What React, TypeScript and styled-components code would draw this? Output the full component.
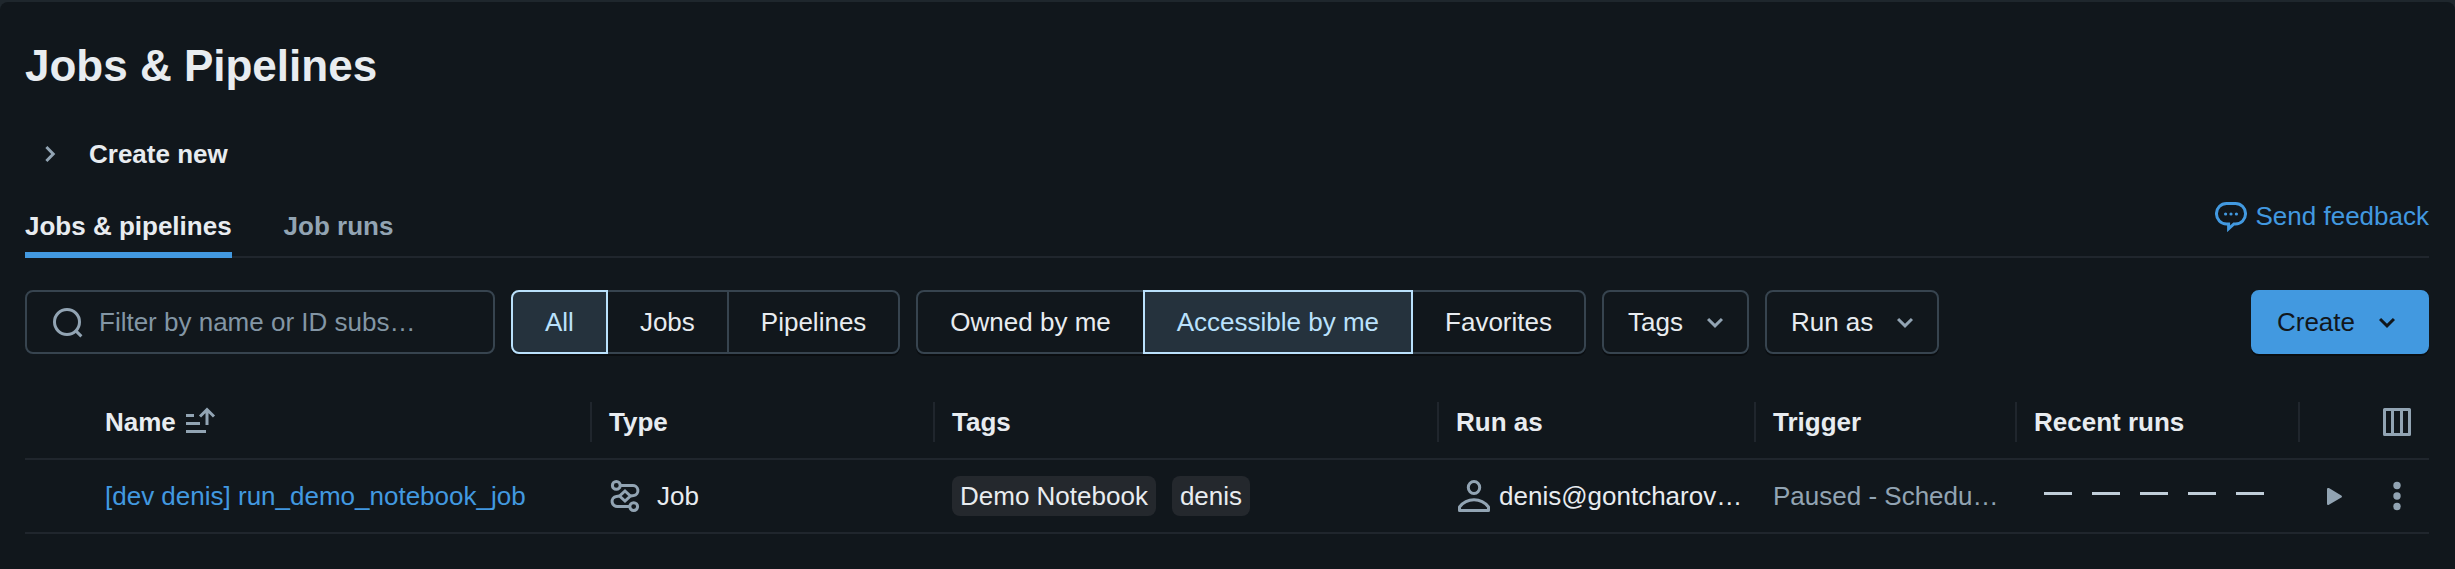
import React from "react";
import styled, { createGlobalStyle, css } from "styled-components";

const c = {
  bg: "#11171c",
  frame: "#1f272d",
  text: "#e8ecf0",
  muted: "#92a4b3",
  placeholder: "#8396a5",
  blue: "#4299e0",
  line: "#20262d",
  border: "#37444f",
  activeBg: "#25323d",
  activeFg: "#bae1fc",
  pill: "#24282d",
};

const Global = createGlobalStyle`
  * { box-sizing: border-box; }
  body { margin: 0; background: ${c.frame}; }
  button, input { font: inherit; }
`;

const Page = styled.main`
  margin-top: 2px;
  height: 567px;
  padding: 36px 26px 0 25px;
  border-radius: 8px 8px 0 0;
  background: ${c.bg};
  color: ${c.text};
  font: 26px/40px "Liberation Sans", Arial, sans-serif;
  overflow: hidden;
`;

const Title = styled.h1`
  margin: 0;
  font-size: 44px;
  line-height: 56px;
  font-weight: 700;
`;

const Disclosure = styled.div`
  display: flex;
  align-items: center;
  gap: 22px;
  margin-top: 40px;
  padding-left: 10px;
  font-weight: 700;
`;

const TabBar = styled.nav`
  display: flex;
  align-items: flex-end;
  gap: 52px;
  height: 84px;
  border-bottom: 2px solid ${c.line};
`;

const Tab = styled.a<{ $active?: boolean }>`
  height: 54px;
  margin-bottom: -2px;
  padding-top: 2px;
  font-weight: 700;
  color: ${(p) => (p.$active ? c.text : c.muted)};
  border-bottom: 6px solid ${(p) => (p.$active ? c.blue : "transparent")};
`;

const Feedback = styled.a`
  display: flex;
  align-items: center;
  gap: 9px;
  height: 40px;
  margin: 0 0 20px auto;
  color: ${c.blue};
`;

const Toolbar = styled.div`
  display: flex;
  gap: 16px;
  margin-top: 32px;
`;

const boxed = css`
  height: 64px;
  border: 2px solid ${c.border};
  border-radius: 8px;
`;

const Search = styled.label`
  ${boxed}
  display: flex;
  align-items: center;
  gap: 16px;
  width: 470px;
  padding-left: 24px;
  color: ${c.placeholder};
`;

const Segments = styled.div`
  display: flex;
  border-radius: 8px;
  box-shadow: 0 2px 0 rgba(0, 0, 0, 0.4);
`;

const Segment = styled.button<{ $active?: boolean }>`
  height: 64px;
  padding: 0 32px;
  border: 2px solid ${(p) => (p.$active ? c.activeFg : c.border)};
  background: ${(p) => (p.$active ? c.activeBg : c.bg)};
  color: ${(p) => (p.$active ? c.activeFg : c.text)};
  position: relative;
  z-index: ${(p) => (p.$active ? 1 : 0)};
  & + & { margin-left: -2px; }
  &:first-child { border-radius: 8px 0 0 8px; }
  &:last-child { border-radius: 0 8px 8px 0; }
`;

const Select = styled.button<{ $primary?: boolean }>`
  ${boxed}
  display: flex;
  align-items: center;
  gap: 16px;
  padding: 0 16px 0 24px;
  background: ${c.bg};
  color: ${c.text};
  box-shadow: 0 2px 0 rgba(0, 0, 0, 0.4);
  ${(p) =>
    p.$primary &&
    css`
      margin-left: auto;
      padding-right: 24px;
      border-color: ${c.blue};
      background: ${c.blue};
      color: ${c.bg};
    `}
`;

const Row = styled.div`
  display: grid;
  grid-template-columns: 567px 343px 504px 317px 261px 283px 64px 65px;
  align-items: center;
  height: 74px;
  border-bottom: 2px solid ${c.line};
`;

const Table = styled.section`
  margin-top: 32px;
`;

const HeadCell = styled.div<{ $bare?: boolean }>`
  display: flex;
  align-items: center;
  height: 40px;
  gap: 9px;
  font-weight: 700;
  padding-left: ${(p) => (p.$bare ? "80px" : "17px")};
  border-right: 2px solid ${c.line};
`;

const Cell = styled.div<{ $left?: number; $gap?: number; $muted?: boolean }>`
  display: flex;
  align-items: center;
  height: 40px;
  min-width: 0;
  gap: ${(p) => p.$gap ?? 16}px;
  padding-left: ${(p) => p.$left ?? 17}px;
  color: ${(p) => (p.$muted ? c.muted : c.text)};
  white-space: nowrap;
`;

const IconCell = styled.div<{ $wide?: boolean }>`
  display: flex;
  align-items: center;
  justify-content: center;
  padding-left: ${(p) => (p.$wide ? "0" : "4px")};
  grid-column: ${(p) => (p.$wide ? "8" : "auto")};
`;

const JobLink = styled.a`
  color: ${c.blue};
`;

const Pill = styled.span`
  height: 40px;
  padding: 0 8px;
  border-radius: 8px;
  background: ${c.pill};
`;

const Dash = styled.i`
  width: 28px;
  height: 3px;
  margin: 0 10px 5px;
  background: #c0cdd8;
`;

const Svg = styled.svg<{ $color?: string }>`
  display: block;
  flex: none;
  color: ${(p) => p.$color ?? c.muted};
`;

const ChevronDown = ({ color }: { color?: string }) => (
  <Svg $color={color} width="32" height="32" viewBox="0 0 16 16" fill="currentColor">
    <path d="M8 8.917 10.947 6 12 7.042 8 11 4 7.042 5.053 6z" />
  </Svg>
);

const ChevronRight = () => (
  <Svg width="32" height="32" viewBox="0 0 16 16" fill="currentColor">
    <path d="M8.083 8 5.166 5.053 6.208 4l3.958 4-3.958 4-1.042-1.053z" />
  </Svg>
);

const SearchIcon = () => (
  <Svg width="32" height="32" viewBox="0 0 32 32" fill="none" stroke="currentColor" strokeWidth="3">
    <circle cx="16" cy="16" r="12.5" />
    <path d="M24.6 24.6 30.4 30.4" />
  </Svg>
);

const SortIcon = () => (
  <Svg width="32" height="32" viewBox="0 0 32 32" fill="none" stroke="currentColor" strokeWidth="3">
    <path d="M1 9.5h8M1 17.5h14M1 25.5h20M22 19V3.5M15 10.5l7-7 7 7" />
  </Svg>
);

const WorkflowIcon = () => (
  <Svg width="32" height="32" viewBox="0 0 32 32" fill="none" stroke="currentColor" strokeWidth="3">
    <circle cx="7.3" cy="5.4" r="3.9" />
    <circle cx="24.7" cy="26.6" r="3.9" />
    <path d="M11.2 5.5H23a5.1 5.1 0 0 1 1.6 10.1L21.6 16M20.8 26.5H9A5.1 5.1 0 0 1 7.4 16.4L10.4 16" />
    <path d="M16 11 21.4 16 16 21 10.6 16Z" />
  </Svg>
);

const UserIcon = () => (
  <Svg width="32" height="32" viewBox="0 0 32 32" fill="none" stroke="currentColor" strokeWidth="3">
    <ellipse cx="16" cy="7.5" rx="5.7" ry="6" />
    <path d="M1.5 30.5V27C5 22.5 10 19.8 16 19.8S27 22.5 30.5 27V30.5Z" strokeLinejoin="round" />
  </Svg>
);

const SpeechIcon = () => (
  <Svg $color={c.blue} width="32" height="32" viewBox="0 0 32 32" fill="none" stroke="currentColor" strokeWidth="3">
    <path d="M11.5 3.5h9a10 10 0 0 1 10 10.3 10 10 0 0 1-10 10.2h-1.6L13.6 28.8V24h-2.1a10 10 0 0 1-10-10.2 10 10 0 0 1 10-10.3Z" />
    <g fill="currentColor" stroke="none">
      <circle cx="10.6" cy="14" r="1.6" />
      <circle cx="16" cy="14" r="1.6" />
      <circle cx="21.4" cy="14" r="1.6" />
    </g>
  </Svg>
);

const ColumnsIcon = () => (
  <Svg width="32" height="32" viewBox="0 0 32 32" fill="none" stroke="currentColor" strokeWidth="3">
    <path d="M3.5 3.5h25v25h-25ZM11.5 3.5v25M20.5 3.5v25" strokeLinejoin="round" />
  </Svg>
);

const PlayIcon = () => (
  <Svg width="32" height="32" viewBox="0 0 32 32" fill="currentColor">
    <path d="M9 9.2c0-1 1-1.6 1.9-1.1l12.4 7.3c.9.5.9 1.7 0 2.2l-12.4 7.2c-.9.5-1.9-.1-1.9-1.1Z" />
  </Svg>
);

const KebabIcon = () => (
  <Svg width="32" height="32" viewBox="0 0 32 32" fill="currentColor">
    <circle cx="16" cy="5.5" r="3.7" />
    <circle cx="16" cy="16" r="3.7" />
    <circle cx="16" cy="26.5" r="3.7" />
  </Svg>
);

const SegmentGroup = ({ items, active }: { items: string[]; active: string }) => (
  <Segments>
    {items.map((item) => (
      <Segment key={item} $active={item === active}>{item}</Segment>
    ))}
  </Segments>
);

export default function App() {
  return (
    <>
      <Global />
      <Page>
        <Title>Jobs &amp; Pipelines</Title>
        <Disclosure>
          <ChevronRight />
          <span>Create new</span>
        </Disclosure>
        <TabBar>
          <Tab $active>Jobs &amp; pipelines</Tab>
          <Tab>Job runs</Tab>
          <Feedback>
            <SpeechIcon />
            Send feedback
          </Feedback>
        </TabBar>
        <Toolbar>
          <Search>
            <SearchIcon />
            <span>Filter by name or ID subs…</span>
          </Search>
          <SegmentGroup items={["All", "Jobs", "Pipelines"]} active="All" />
          <SegmentGroup items={["Owned by me", "Accessible by me", "Favorites"]} active="Accessible by me" />
          <Select>Tags<ChevronDown /></Select>
          <Select>Run as<ChevronDown /></Select>
          <Select $primary>Create<ChevronDown color={c.bg} /></Select>
        </Toolbar>
        <Table>
          <Row>
            <HeadCell $bare>Name<SortIcon /></HeadCell>
            <HeadCell>Type</HeadCell>
            <HeadCell>Tags</HeadCell>
            <HeadCell>Run as</HeadCell>
            <HeadCell>Trigger</HeadCell>
            <HeadCell>Recent runs</HeadCell>
            <IconCell $wide><ColumnsIcon /></IconCell>
          </Row>
          <Row>
            <Cell $left={80}><JobLink>[dev denis] run_demo_notebook_job</JobLink></Cell>
            <Cell><WorkflowIcon />Job</Cell>
            <Cell><Pill>Demo Notebook</Pill><Pill>denis</Pill></Cell>
            <Cell $left={19} $gap={9}><UserIcon />denis@gontcharov…</Cell>
            <Cell $muted>Paused - Schedu…</Cell>
            <Cell $gap={0}>
              {[0, 1, 2, 3, 4].map((i) => <Dash key={i} />)}
            </Cell>
            <IconCell><PlayIcon /></IconCell>
            <IconCell $wide><KebabIcon /></IconCell>
          </Row>
        </Table>
      </Page>
    </>
  );
}
